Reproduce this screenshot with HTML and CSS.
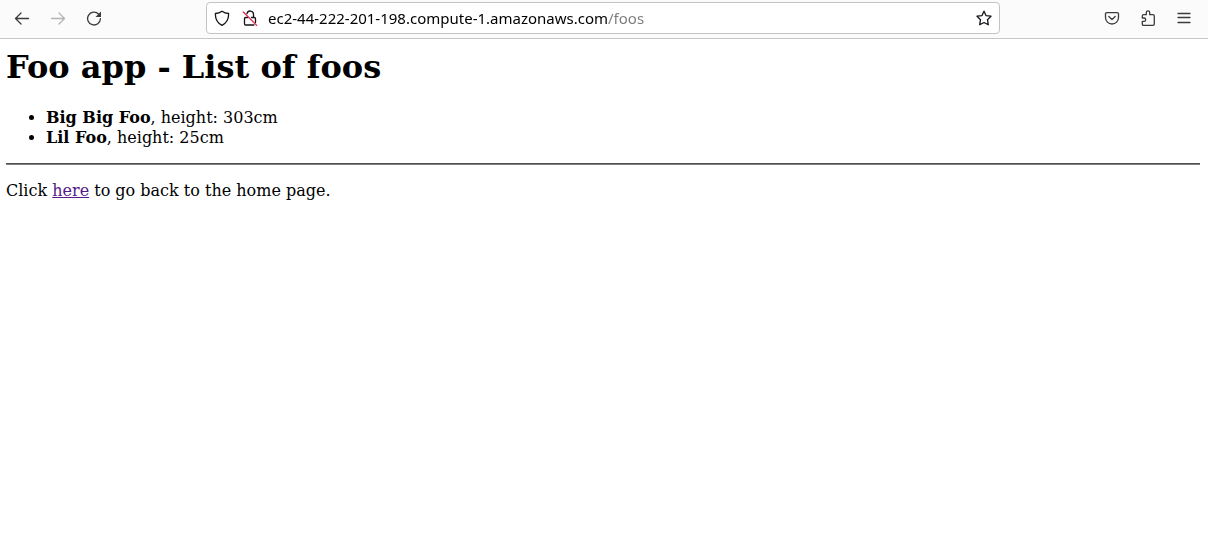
FILE: index.html
```html
<!DOCTYPE html>
<html lang="en">
<head>
<meta charset="utf-8">
<title>Foo app</title>
<link rel="stylesheet" href="styles.css">
</head>
<body>
<header class="toolbar">
  <nav class="buttons" aria-label="Navigation">
    <button class="tool" type="button" aria-label="Back"><svg class="icon" viewBox="0 0 16 16"><path d="M14.5 8.5H1.8M7 3L1.5 8.5L7 14"/></svg></button>
    <button class="tool" type="button" aria-label="Forward" disabled><svg class="icon" viewBox="0 0 16 16"><path d="M1.5 8.5H14.2M9 3L14.5 8.5L9 14"/></svg></button>
    <button class="tool" type="button" aria-label="Reload"><svg class="icon" viewBox="0 0 16 16"><path d="M12.500 4A6.400 6.400 0 1 0 14.400 8.700"/><path class="solid" d="M15 1.500V7H9.500Z"/></svg></button>
  </nav>
  <form class="address">
    <button class="tool small" type="button" aria-label="Tracking protection"><svg class="icon dark" viewBox="0 0 16 16"><path d="M8 1.200C10 2.600 12.300 3.300 14.600 3.500C14.800 8.500 13 12.800 8 15.300C3 12.800 1.200 8.500 1.400 3.500C3.700 3.300 6 2.600 8 1.200Z"/></svg></button>
    <button class="tool small" type="button" aria-label="Connection is not secure"><svg class="icon dark" viewBox="0 0 16 16"><path d="M5 3.500A3.300 3.300 0 0 1 11.500 4.300V7.500M9.500 7.500H12.300Q13.500 7.500 13.500 8.700V12.500M5.500 7.500H3.700Q2.500 7.500 2.500 8.700V13.800Q2.500 15 3.700 15H12"/><path class="slash" d="M1.300 2L14.700 15.400"/></svg></button>
    <input class="url" type="text" aria-label="Address" value="ec2-44-222-201-198.compute-1.amazonaws.com/foos">
    <button class="tool small" type="button" aria-label="Bookmark this page"><svg class="icon dark" viewBox="0 0 16 16"><path d="M8 1.200L10 5.600L15 6.200L11.500 9.700L12.300 14.800L8 12.500L3.700 14.800L4.500 9.700L1 6.200L6 5.600Z"/></svg></button>
  </form>
  <div class="buttons">
    <button class="tool" type="button" aria-label="Save to Pocket"><svg class="icon" viewBox="0 0 16 16"><path d="M2.700 2.600H13.300Q14.500 2.600 14.500 3.800V7.500A6.500 6.500 0 0 1 1.500 7.500V3.800Q1.500 2.600 2.700 2.600ZM4.800 6.500L8 9.500L11.200 6.500"/></svg></button>
    <button class="tool" type="button" aria-label="Extensions"><svg class="icon" viewBox="0 0 16 16"><path d="M2.300 8V6Q2.300 4.700 3.600 4.700H6.300V2.500A1.700 1.700 0 0 1 9.700 2.500V4.700H13Q14.300 4.700 14.300 6V14Q14.300 15.300 13 15.300H3.600Q2.300 15.300 2.300 14V11.400H4A1.700 1.700 0 0 0 4 8Z"/></svg></button>
    <button class="tool" type="button" aria-label="Menu"><svg class="icon" viewBox="0 0 16 16"><path d="M2 3.500H14M2 7.500H14M2 12.500H14"/></svg></button>
  </div>
</header>
<main class="page">
  <h1 class="title">Foo app - List of foos</h1>
  <ul class="foos">
    <li><b>Big Big Foo</b>, height: 303cm</li>
    <li><b>Lil Foo</b>, height: 25cm</li>
  </ul>
  <hr class="rule">
  <p class="back">Click <a class="link" href="#">here</a> to go back to the home page.</p>
</main>
</body>
</html>
```
FILE: styles.css
```css
body {
  margin: 0;
  background: #fff;
  color: #000;
  font: 16px/20px "DejaVu Serif", serif;
}

.toolbar {
  display: flex;
  align-items: center;
  gap: 96px;
  padding: 2px 8px 4px 6px;
  background: #fbfbfb;
  border-bottom: 1px solid #c6c6c6;
}

.buttons {
  display: flex;
  gap: 4px;
}

.tool {
  display: flex;
  align-items: center;
  justify-content: center;
  flex: none;
  width: 32px;
  height: 32px;
  padding: 0;
  border: 0;
  background: none;
  color: #3b3b3b;
}

.tool:disabled {
  color: #b3b3b3;
}

.small {
  width: 28px;
  height: 30px;
}

.icon {
  width: 16px;
  height: 16px;
  fill: none;
  stroke: currentColor;
  stroke-width: 1.3;
  stroke-linecap: round;
  stroke-linejoin: round;
}

.dark {
  color: #15141a;
}

.solid {
  fill: currentColor;
  stroke: none;
}

.slash {
  stroke: #e22850;
}

.address {
  display: flex;
  align-items: center;
  flex: 1;
  min-width: 0;
  padding: 0 1px;
  border: 1px solid #c3c3c3;
  border-radius: 4px;
  background: #fff;
}

/* The host is black and the path after it is grey. */
.url {
  flex: 1;
  min-width: 0;
  height: 30px;
  margin-left: 4px;
  padding: 0;
  border: 0;
  outline: 0;
  background: linear-gradient(to right, #000 339px, #7a7a7a 339px);
  background-clip: text;
  color: transparent;
  font: 15px/20px "Noto Sans", sans-serif;
}

.page {
  padding: 8px 8px 0 6px;
}

.title {
  margin: 0 0 21px;
  font-size: 32px;
  line-height: 40px;
}

.foos {
  margin: 0 0 15px;
  padding-left: 40px;
}

.rule {
  margin: 0;
  border: 0;
  border-top: 1px solid #505050;
  border-bottom: 1px solid #808080;
}

.back {
  margin: 16px 0;
}

.link {
  color: #551a8b;
}
```
